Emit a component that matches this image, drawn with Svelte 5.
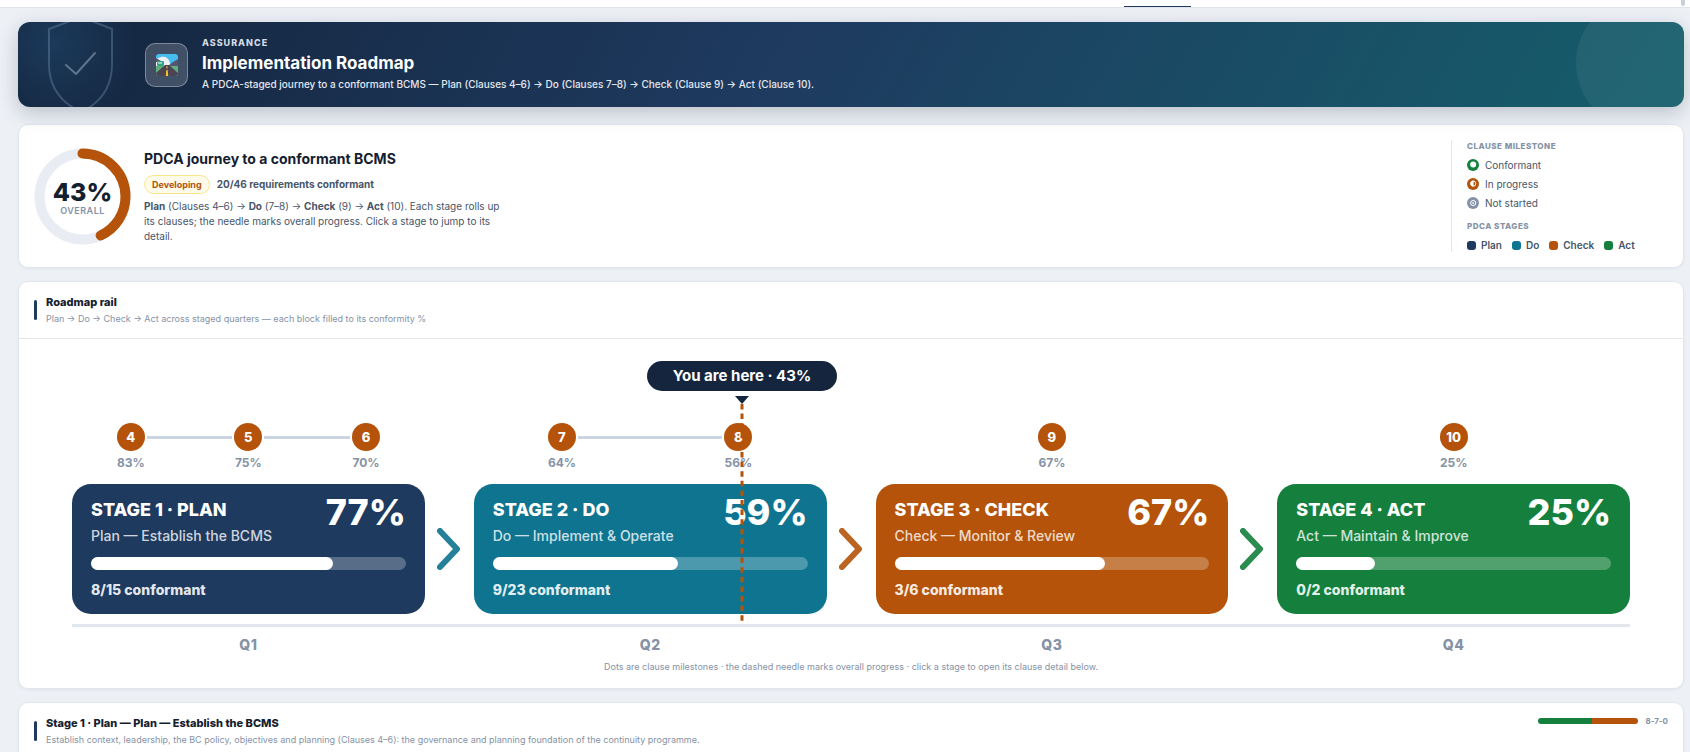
<script>
  const overall = 43

  const stages = [
    {
      n: 1, key: 'plan', name: 'Plan', label: 'Plan — Establish the BCMS', pct: 77, done: '8/15', quarter: 'Q1',
      clauses: [{ id: 4, pct: 83 }, { id: 5, pct: 75 }, { id: 6, pct: 70 }]
    },
    {
      n: 2, key: 'do', name: 'Do', label: 'Do — Implement & Operate', pct: 59, done: '9/23', quarter: 'Q2',
      clauses: [{ id: 7, pct: 64 }, { id: 8, pct: 56 }]
    },
    {
      n: 3, key: 'check', name: 'Check', label: 'Check — Monitor & Review', pct: 67, done: '3/6', quarter: 'Q3',
      clauses: [{ id: 9, pct: 67 }]
    },
    {
      n: 4, key: 'act', name: 'Act', label: 'Act — Maintain & Improve', pct: 25, done: '0/2', quarter: 'Q4',
      clauses: [{ id: 10, pct: 25 }]
    }
  ]

  const RADIUS = 43
  const CIRC = 2 * Math.PI * RADIUS

  let selected = $state(1)
  let dash = $derived(`${(CIRC * overall) / 100} ${CIRC}`)
</script>

<div class="page">
  <nav class="tabs"><span class="tab-line"></span><span class="thumb"></span></nav>

  <main>
    <header class="banner">
      <svg class="shield" viewBox="0 0 70 104" aria-hidden="true">
        <path d="M35 3 L66 15 V50 C66 76 52 90 35 98 C18 90 3 76 3 50 V15 Z" />
        <path class="tick" d="M20 51 L30 60 L49 39" />
      </svg>
      <div class="banner-icon">
        <svg viewBox="0 0 22 22" width="22" height="22" aria-hidden="true">
          <defs><clipPath id="sq"><rect width="22" height="22" rx="3" /></clipPath></defs>
          <g clip-path="url(#sq)">
            <rect width="22" height="22" fill="#45bdf0" />
            <path d="M0 5 L5 3 C10 2 13 5 14 9 V12 H0Z" fill="#eef2f5" />
            <path d="M12 12 L17 8 L22 5 V13 H12Z" fill="#5b5470" />
            <path d="M0 4 L5 7 L3 8 H0Z" fill="#59536c" />
            <rect y="12" width="22" height="10" fill="#5fae7c" />
            <path d="M9 11 H13 L22 19 V22 H0 V19Z" fill="#4b4453" />
            <rect x="1" y="7" width="7" height="5" rx="1" fill="#35a383" />
            <rect x="2" y="8" width="4" height="2" fill="#8fd3c0" />
            <path d="M10.6 12 H11.4 L11.6 14.5 H10.4Z M10.3 16 H11.7 L12.2 22 H9.8Z" fill="#fdc422" />
          </g>
        </svg>
      </div>
      <div class="banner-text">
        <div class="eyebrow">ASSURANCE</div>
        <h1>Implementation Roadmap</h1>
        <p>A PDCA-staged journey to a conformant BCMS — Plan (Clauses 4–6) → Do (Clauses 7–8) → Check (Clause 9) → Act (Clause 10).</p>
      </div>
    </header>

    <section class="card overview">
      <div class="ring">
        <svg viewBox="0 0 97 97" aria-hidden="true">
          <circle cx="48.5" cy="48.5" r={RADIUS} class="track" />
          <circle cx="48.5" cy="48.5" r={RADIUS} class="value" stroke-dasharray={dash} transform="rotate(-90 48.5 48.5)" />
        </svg>
        <div class="ring-text">
          <strong>{overall}%</strong>
          <span>OVERALL</span>
        </div>
      </div>

      <div class="summary">
        <h2>PDCA journey to a conformant BCMS</h2>
        <div class="status">
          <span class="badge">Developing</span>
          <span>20/46 requirements conformant</span>
        </div>
        <p>
          <b>Plan</b> (Clauses 4–6) → <b>Do</b> (7–8) → <b>Check</b> (9) → <b>Act</b> (10). Each stage rolls up its clauses; the needle marks overall progress. Click a stage to jump to its detail.
        </p>
      </div>

      <aside class="legend">
        <h3>CLAUSE MILESTONE</h3>
        <div class="legend-row">
          <svg viewBox="0 0 12 12" aria-hidden="true"><circle cx="6" cy="6" r="6" fill="#15803d" /><circle cx="6.2" cy="5.6" r="3" fill="#fff" /></svg>
          Conformant
        </div>
        <div class="legend-row">
          <svg viewBox="0 0 12 12" aria-hidden="true"><circle cx="6" cy="6" r="6" fill="#b45309" /><circle cx="6.2" cy="5.6" r="2.6" fill="none" stroke="#fff" /><path d="M6.6 2.6 A3 3 0 0 0 6.6 8.6Z" fill="#fff" /></svg>
          In progress
        </div>
        <div class="legend-row">
          <svg viewBox="0 0 12 12" aria-hidden="true"><circle cx="6" cy="6" r="6" fill="#8592a6" /><circle cx="6.2" cy="6" r="2.6" fill="none" stroke="#fff" /><circle cx="6.2" cy="6" r="1" fill="#e5e9ef" /></svg>
          Not started
        </div>
        <h3 class="second">PDCA STAGES</h3>
        <div class="swatches">
          {#each stages as s (s.key)}
            <span class="swatch"><i class={s.key}></i>{s.name}</span>
          {/each}
        </div>
      </aside>
    </section>

    <section class="card">
      <header class="card-head ruled">
        <span class="accent"></span>
        <div>
          <h2>Roadmap rail</h2>
          <p>Plan → Do → Check → Act across staged quarters — each block filled to its conformity %</p>
        </div>
      </header>

      <div class="rail-body">
        <div class="rail">
          <div class="columns milestones">
            {#each stages as s (s.key)}
              <div class="milestone-group">
                {#each s.clauses as c (c.id)}
                  <div class="milestone">
                    <span class="dot">{c.id}</span>
                    <span class="dot-pct">{c.pct}%</span>
                  </div>
                {/each}
              </div>
            {/each}
          </div>

          <div class="stages">
            {#each stages as s, i (s.key)}
              {#if i > 0}
                <svg class="chevron {s.key}" viewBox="0 0 49 46" aria-hidden="true"><path d="M15 5 L32 23 L15 41" /></svg>
              {/if}
              <button class="stage {s.key}" aria-pressed={selected === s.n} onclick={() => (selected = s.n)}>
                <span class="stage-top">
                  <span>
                    <span class="stage-title">STAGE {s.n} · {s.name.toUpperCase()}</span>
                    <span class="stage-label">{s.label}</span>
                  </span>
                  <span class="stage-pct">{s.pct}%</span>
                </span>
                <span class="bar"><span class="fill" style="width: {s.pct}%"></span></span>
                <span class="stage-done">{s.done} conformant</span>
              </button>
            {/each}
          </div>

          <div class="columns quarters">
            {#each stages as s (s.key)}
              <span>{s.quarter}</span>
            {/each}
          </div>

          <div class="needle" style="left: {overall}%">
            <span class="pill">You are here · {overall}%</span>
            <span class="pointer"></span>
            <svg class="dashes" aria-hidden="true"><line x1="2" y1="0" x2="2" y2="100%" /></svg>
          </div>
        </div>
        <p class="caption">Dots are clause milestones · the dashed needle marks overall progress · click a stage to open its clause detail below.</p>
      </div>
    </section>

    <section class="card">
      <header class="card-head">
        <span class="accent"></span>
        <div>
          <h2>Stage 1 · Plan — Plan — Establish the BCMS</h2>
          <p>Establish context, leadership, the BC policy, objectives and planning (Clauses 4–6): the governance and planning foundation of the continuity programme.</p>
        </div>
        <div class="split">
          <span class="split-bar"><i class="act" style="flex-grow: 8"></i><i class="check" style="flex-grow: 7"></i></span>
          8-7-0
        </div>
      </header>
    </section>
  </main>
</div>

<style>
  :global(body) {
    background: #edf1f6;
  }

  .page {
    height: 100vh;
    overflow: hidden;
    font-family: Inter, "Liberation Sans", sans-serif;
    color: #15202f;
  }

  h1, h2, h3, p {
    margin: 0;
  }

  .tabs {
    display: flex;
    align-items: flex-end;
    height: 7px;
    background: #fff;
    border-bottom: 1px solid #dfe4ea;
    padding-right: 5px;
  }

  .tab-line {
    width: 67px;
    height: 1px;
    margin-left: auto;
    margin-right: 490px;
    background: #1e3a5f;
  }

  .thumb {
    width: 4px;
    height: 6px;
    align-self: flex-start;
    border-radius: 0 0 2px 2px;
    background: #cbd0d8;
  }

  main {
    display: flex;
    flex-direction: column;
    gap: 13px;
    padding: 14px 6px 40px 18px;
  }

  .plan { --c: #1e3a5f; }
  .do { --c: #0e7490; }
  .check { --c: #b45309; }
  .act { --c: #15803d; }

  .banner {
    position: relative;
    overflow: hidden;
    display: flex;
    align-items: center;
    gap: 14px;
    height: 85px;
    margin-bottom: 4px;
    padding-left: 127px;
    border-radius: 12px;
    background:
      radial-gradient(circle at 36px 22px, rgba(30, 64, 100, .75), transparent 84px),
      linear-gradient(120deg, #14253d 0%, #1e3a5f 45%, #155e6b 100%);
    box-shadow: 0 6px 20px rgba(15, 23, 42, .22);
    color: #fff;
  }

  .banner::after {
    content: '';
    position: absolute;
    right: -26px;
    top: -26px;
    width: 134px;
    height: 134px;
    border-radius: 50%;
    background: rgba(255, 255, 255, .06);
  }

  .shield {
    position: absolute;
    left: 28px;
    top: -8px;
    width: 70px;
    height: 104px;
    fill: none;
    stroke: rgba(160, 200, 225, .25);
    stroke-width: 2;
    stroke-linejoin: round;
    stroke-linecap: round;
  }

  .tick {
    stroke: rgba(200, 215, 230, .4);
  }

  .banner-icon {
    display: grid;
    place-items: center;
    box-sizing: border-box;
    width: 43px;
    height: 44px;
    border: 1px solid rgba(255, 255, 255, .32);
    border-radius: 10px;
    background: rgba(255, 255, 255, .18);
  }

  .eyebrow {
    font-size: 9px;
    line-height: 12px;
    font-weight: 800;
    letter-spacing: 1px;
    color: #d5dbe3;
  }

  h1 {
    margin: 3px 0;
    font-size: 17px;
    line-height: 22px;
    font-weight: 700;
  }

  .banner p {
    font-size: 10px;
    line-height: 15px;
    font-weight: 500;
    color: #e3e8ee;
  }

  .card {
    border: 1px solid #e2e7ee;
    border-radius: 10px;
    background: #fff;
    box-shadow: 0 1px 3px rgba(15, 23, 42, .06);
  }

  .overview {
    display: flex;
    align-items: center;
    gap: 13px;
    padding: 15px 14px 15px 15px;
  }

  .ring {
    position: relative;
    width: 97px;
    height: 97px;
  }

  .ring svg {
    display: block;
  }

  .ring circle {
    fill: none;
    stroke-width: 10;
  }

  .track { stroke: #e9ecf2; }

  .value {
    stroke: #b45309;
    stroke-linecap: round;
  }

  .ring-text {
    position: absolute;
    inset: 0;
    display: flex;
    flex-direction: column;
    align-items: center;
    justify-content: center;
    padding-top: 5px;
  }

  .ring-text strong {
    font-size: 25px;
    line-height: 25px;
    font-weight: 800;
  }

  .ring-text span {
    font-size: 9px;
    line-height: 12px;
    font-weight: 600;
    letter-spacing: .5px;
    color: #8592a6;
  }

  .summary {
    width: 362px;
    color: #475569;
  }

  .summary h2 {
    font-size: 14px;
    line-height: 20px;
    font-weight: 700;
    color: #15202f;
  }

  .status {
    display: flex;
    align-items: center;
    gap: 7px;
    margin: 6px 0 5px;
    font-size: 10px;
    font-weight: 700;
  }

  .badge {
    padding: 0 7px;
    border: 1px solid #fde68a;
    border-radius: 10px;
    background: #fffbeb;
    color: #b45309;
    font-size: 9px;
    line-height: 17px;
    font-weight: 700;
  }

  .summary p {
    font-size: 10px;
    line-height: 15px;
  }

  .summary b {
    font-weight: 700;
  }

  .legend {
    width: 202px;
    margin-left: auto;
    padding-left: 15px;
    border-left: 1px solid #e2e7ee;
    font-size: 10px;
    color: #475569;
  }

  .legend h3 {
    font-size: 8px;
    line-height: 12px;
    font-weight: 800;
    letter-spacing: .5px;
    color: #8592a6;
  }

  .legend-row {
    display: flex;
    align-items: center;
    gap: 6px;
    height: 13px;
    margin-top: 6px;
  }

  .legend-row svg {
    width: 12px;
    height: 12px;
  }

  .legend .second {
    margin-top: 11px;
  }

  .swatches {
    display: flex;
    gap: 10px;
    margin-top: 6px;
    line-height: 14px;
    font-weight: 600;
  }

  .swatch {
    display: flex;
    align-items: center;
    gap: 5px;
  }

  .swatch i {
    width: 9px;
    height: 9px;
    border-radius: 3px;
    background: var(--c);
  }

  .card-head {
    display: flex;
    align-items: center;
    gap: 9px;
    height: 56px;
    padding: 0 15px;
  }

  .ruled {
    border-bottom: 1px solid #e2e7ee;
  }

  .accent {
    width: 3px;
    height: 20px;
    border-radius: 2px;
    background: #1e3a5f;
  }

  .card-head h2 {
    font-size: 11px;
    line-height: 17px;
    font-weight: 800;
  }

  .card-head p,
  .caption {
    font-size: 9px;
    line-height: 15px;
    color: #8592a6;
  }

  .split {
    display: flex;
    align-items: center;
    align-self: flex-start;
    gap: 7px;
    margin: 12px 0 0 auto;
    font-size: 8px;
    line-height: 12px;
    font-weight: 700;
    color: #8592a6;
  }

  .split-bar {
    display: flex;
    width: 100px;
    height: 6px;
    border-radius: 3px;
    overflow: hidden;
  }

  .split-bar i {
    background: var(--c);
  }

  .rail-body {
    padding: 22px 53px 14px;
  }

  .rail {
    position: relative;
    padding-top: 62px;
  }

  .columns {
    display: grid;
    grid-template-columns: repeat(4, minmax(0, 1fr));
    column-gap: 49px;
  }

  .milestone-group {
    display: flex;
  }

  .milestone {
    position: relative;
    flex: 1;
    display: flex;
    flex-direction: column;
    align-items: center;
  }

  .milestone + .milestone::before {
    content: '';
    position: absolute;
    top: 13px;
    right: calc(50% + 16px);
    width: calc(100% - 32px);
    height: 3px;
    background: #cbd5e1;
  }

  .dot {
    width: 28px;
    height: 28px;
    border-radius: 50%;
    background: #b45309;
    color: #fff;
    font-size: 13px;
    line-height: 28px;
    font-weight: 800;
    text-align: center;
  }

  .dot-pct {
    margin-bottom: 10px;
    font-size: 12px;
    line-height: 23px;
    font-weight: 700;
    color: #8592a6;
  }

  .stages {
    display: flex;
    align-items: center;
    padding-bottom: 10px;
    border-bottom: 3px solid #e2e7ee;
  }

  .stage {
    flex: 1;
    display: block;
    min-width: 0;
    padding: 14px 19px;
    border: 0;
    border-radius: 19px;
    background: var(--c);
    color: #fff;
    font-family: inherit;
    text-align: left;
    cursor: pointer;
  }

  .stage-top {
    display: flex;
    align-items: flex-start;
    justify-content: space-between;
  }

  .stage-title,
  .stage-label,
  .bar,
  .fill,
  .stage-done {
    display: block;
  }

  .stage-title {
    margin-bottom: 3px;
    font-size: 18px;
    line-height: 24px;
    font-weight: 800;
  }

  .stage-label {
    font-size: 14px;
    line-height: 22px;
    font-weight: 500;
    color: rgba(255, 255, 255, .8);
  }

  .stage-pct {
    font-size: 36px;
    line-height: 28px;
    font-weight: 800;
  }

  .bar {
    height: 13px;
    margin: 10px 0;
    border-radius: 7px;
    background: rgba(255, 255, 255, .26);
  }

  .fill {
    height: 100%;
    border-radius: 7px;
    background: #fff;
  }

  .stage-done {
    font-size: 14px;
    line-height: 20px;
    font-weight: 800;
    color: rgba(255, 255, 255, .9);
  }

  .chevron {
    flex: none;
    width: 49px;
    height: 46px;
    fill: none;
    stroke: var(--c);
    stroke-width: 6;
    stroke-linecap: round;
    stroke-linejoin: round;
    opacity: .9;
  }

  .quarters {
    padding: 8px 0 4px;
    font-size: 14px;
    line-height: 20px;
    font-weight: 800;
    letter-spacing: .5px;
    text-align: center;
    color: #8592a6;
  }

  .needle {
    position: absolute;
    top: 0;
    bottom: 38px;
    display: flex;
    flex-direction: column;
    align-items: center;
    transform: translateX(-50%);
    pointer-events: none;
  }

  .pill {
    width: 190px;
    border-radius: 15px;
    background: #14253d;
    color: #fff;
    font-size: 15px;
    line-height: 30px;
    font-weight: 700;
    text-align: center;
  }

  .pointer {
    margin-top: 5px;
    border: 7px solid transparent;
    border-top: 8px solid #14253d;
    border-bottom: 0;
  }

  .dashes {
    flex: 1;
    min-height: 0;
    width: 4px;
  }

  .dashes line {
    stroke: #b45309;
    stroke-width: 3;
    stroke-dasharray: 5.5 4.1;
  }

  .caption {
    text-align: center;
  }
</style>
